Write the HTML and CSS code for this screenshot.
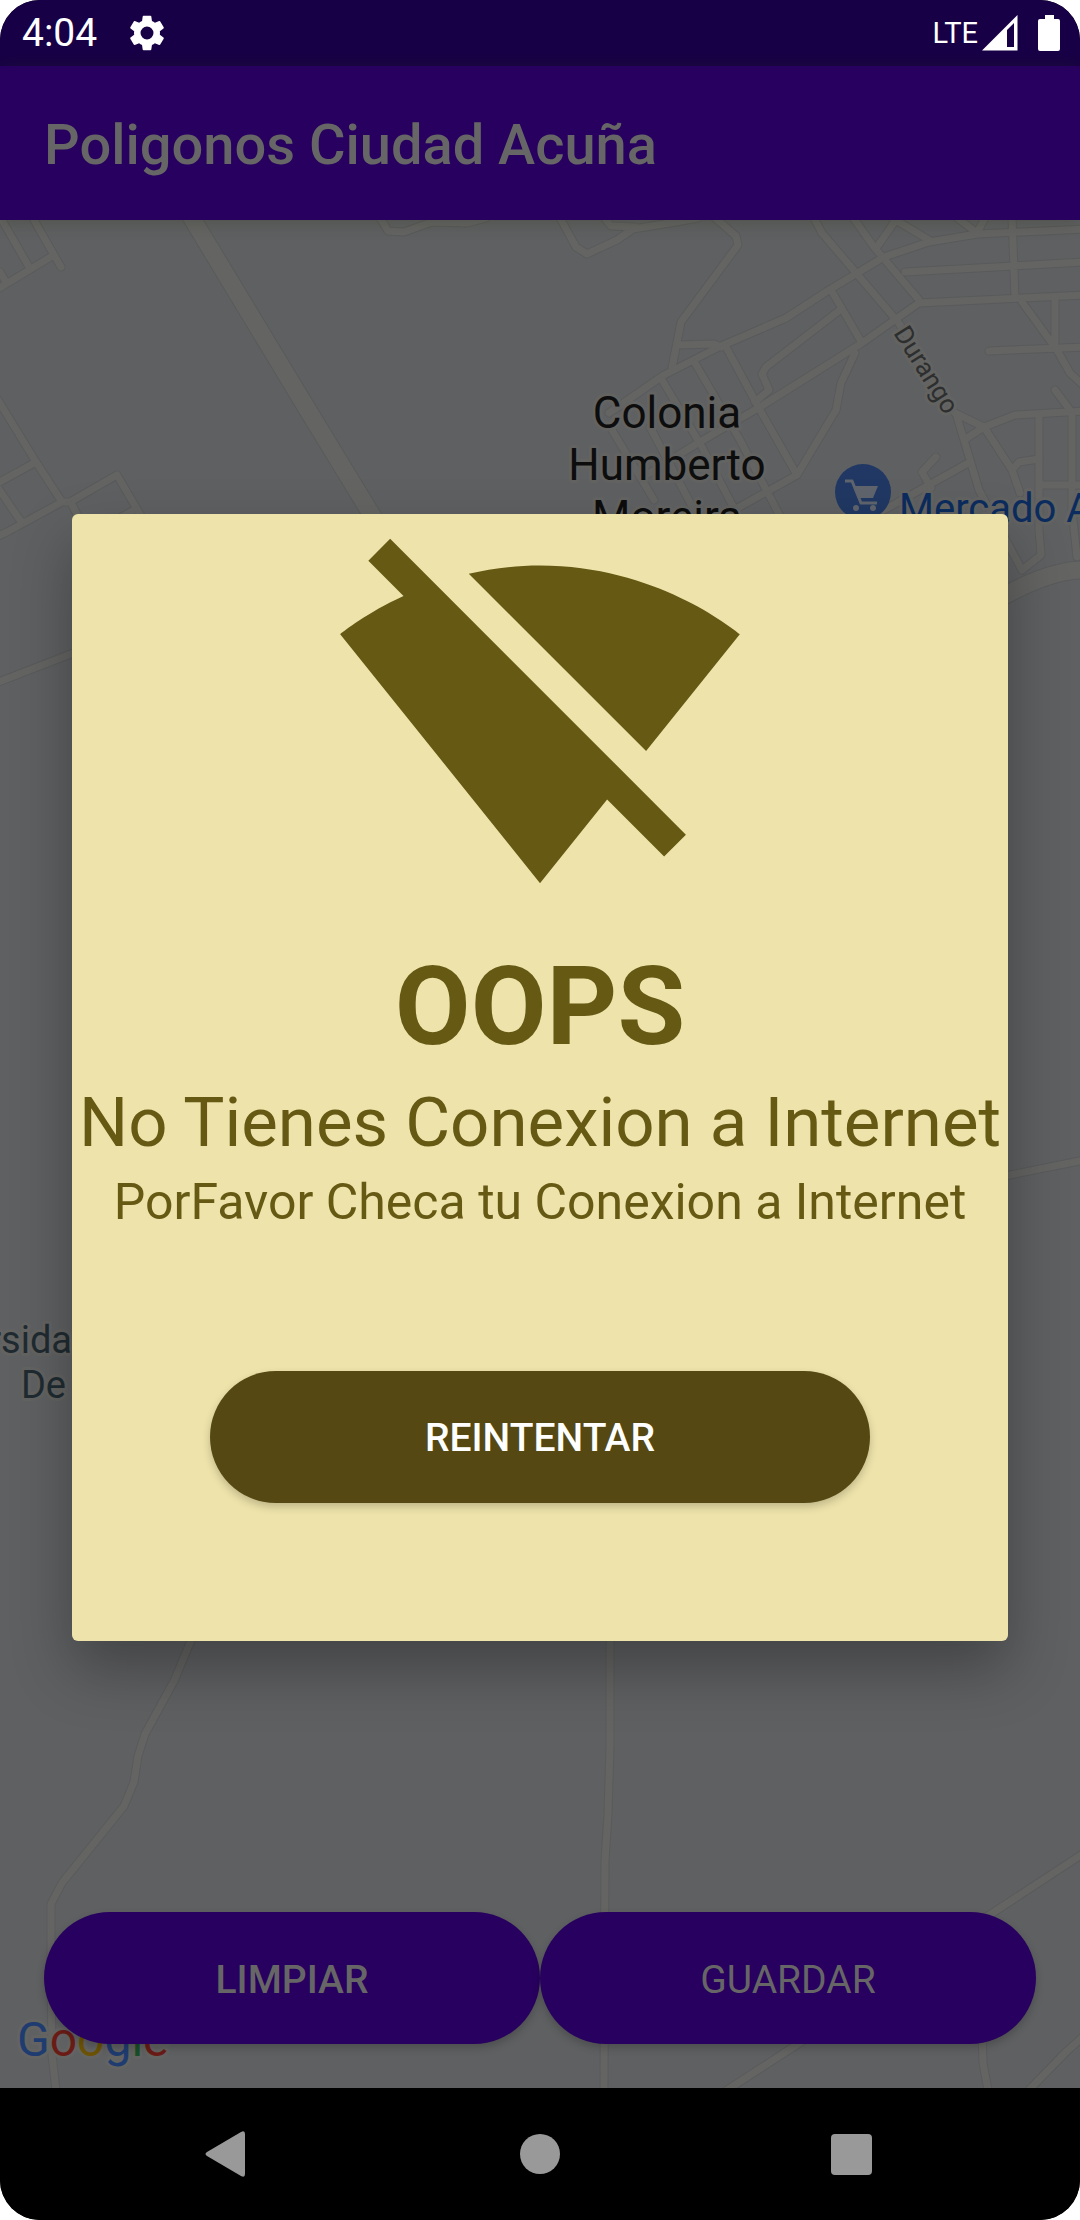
FILE: index.html
```html
<!DOCTYPE html>
<html lang="es">
<head>
<meta charset="utf-8">
<meta name="viewport" content="width=device-width, initial-scale=1">
<title>Poligonos Ciudad Acuña</title>
<link rel="stylesheet" href="styles.css">
</head>
<body>
<div class="device">
  <header class="status-bar">
    <span class="clock">4:04</span>
    <svg class="gear" viewBox="2 2 20 20" aria-hidden="true"><path fill="currentColor" d="M19.14 12.94c.04-.3.06-.61.06-.94 0-.32-.02-.64-.07-.94l2.03-1.58a.49.49 0 0 0 .12-.61l-1.92-3.32a.49.49 0 0 0-.59-.22l-2.39.96a7 7 0 0 0-1.62-.94l-.36-2.54a.48.48 0 0 0-.48-.41h-3.84a.47.47 0 0 0-.47.41l-.36 2.54c-.59.24-1.13.57-1.62.94l-2.39-.96a.48.48 0 0 0-.59.22L2.74 8.87a.47.47 0 0 0 .12.61l2.03 1.58c-.05.3-.09.63-.09.94s.02.64.07.94l-2.03 1.58a.49.49 0 0 0-.12.61l1.92 3.32c.12.22.37.29.59.22l2.39-.96c.5.38 1.03.7 1.62.94l.36 2.54c.05.24.24.41.48.41h3.84c.24 0 .44-.17.47-.41l.36-2.54c.59-.24 1.13-.56 1.62-.94l2.39.96c.22.08.47 0 .59-.22l1.92-3.32a.47.47 0 0 0-.12-.61l-2.01-1.58zM12 15.6a3.6 3.6 0 1 1 0-7.2 3.6 3.6 0 0 1 0 7.2z"/></svg>
    <span class="network">LTE</span>
    <svg class="signal" viewBox="0 0 36 36" aria-hidden="true"><path fill="currentColor" fill-rule="evenodd" d="M0 35.500L35.500 0V35.500zM25 15V32h7V8z"/></svg>
    <svg class="battery" viewBox="0 0 22 36" aria-hidden="true"><path fill="currentColor" d="M7 0h9v4h4q2 0 2 2v28q0 2-2 2H2q-2 0-2-2V6q0-2 2-2h5z"/></svg>
  </header>

  <div class="app-bar"><h1 class="app-title">Poligonos Ciudad Acuña</h1></div>

  <main class="map">
    <svg class="map-canvas" viewBox="0 220 1080 1868" preserveAspectRatio="xMidYMin slice" role="img" aria-label="Mapa">
      <defs>
        <g id="streets">
          <path d="M2 220L29 267M34 220L54 255L61 267M54 255L6 284L-4 290M0 272L6 282"/>
          <path d="M379 216L388 231L404 232L432 222L467 223L486 218"/>
          <path d="M-2 400L36 462L62 502M36 462L-4 484M-2 488L22 523M-4 537L7 532L62 502H70L117 475L141 516M71 503L78 516M134 510L120 518"/>
          <path d="M-4 683L76 652"/>
          <path d="M193 1636L174 1681L145 1734L138 1756L134 1782L124 1806L62 1883L51 1904V1956L52 2055L56 2090"/>
          <path d="M610 1630V1746L608 1814L605 1861L604 2090M1084 1853L991 1914L798 2044L727 2090M982 2030L983 2063L988 2090M1084 2036L1067 2051L1029 2090M1000 1177L1084 1160"/>
          <path d="M559 216L576 247L587 254L617 240L633 229L676 222L698 218M603 216L611 226L635 227"/>
          <path d="M713 216L736 236L738 245L681 322L672 368"/>
          <path d="M813 216L822 233L898 322L930 370M852 216L874 247L919 300M898 217L877 247M892 218L929 240"/>
          <path d="M609 413L664 375L719 347L786 318L829 290L884 257L929 242L977 234L1084 229"/>
          <path d="M955 216L977 233L986 216M1012 216L1015 298M905 272L1084 262"/>
          <path d="M643 477L698 443L760 407L862 343L896 319L919 303L1022 298L1084 295M831 290L862 343"/>
          <path d="M840 310L766 367L762 374L769 390L755 402M678 345L714 344L721 347"/>
          <path d="M726 347L760 410L797 475L836 410L841 383L855 353M797 475L734 510"/>
          <path d="M695 363L740 440L780 516M662 380L702 447L738 516M612 430L654 500M650 427L694 510"/>
          <path d="M1022 302L1057 350L1070 373L1084 386M1055 298V347M989 351L1084 347"/>
          <path d="M955 413L984 427L1015 415L1084 411M957 417L964 440L979 490L1022 570M964 440L984 427L1012 470L1020 493M1012 470L1019 462L1039 459"/>
          <path d="M1039 415V530L1041 555L1022 570M1072 412V510L1077 557M1043 485H1084M1055 390L1070 410M936 457L922 472L931 488M970 462L884 510"/>
        </g>
        <g id="avenues">
          <path d="M190 215L306 407L373 517M1084 570Q1050 570 1000 598"/>
        </g>
      </defs>
      <use href="#streets" class="street-edge"/>
      <use href="#avenues" class="avenue-edge"/>
      <use href="#streets" class="street"/>
      <use href="#avenues" class="avenue"/>

      <g class="label label-area">
        <text x="667" y="428">Colonia</text>
        <text x="667" y="480">Humberto</text>
        <text x="667" y="532">Moreira</text>
      </g>
      <text class="label label-street" transform="translate(893 333) rotate(58)">Durango</text>
      <g>
        <circle cx="863" cy="492" r="28" fill="#203863"/>
        <path fill="none" stroke="#5f646d" stroke-width="3" d="M845 481h7l9 22h16"/>
        <path fill="#5f646d" d="M853 486h25l-5 12h-15z"/>
        <circle cx="856" cy="508" r="3" fill="#5f646d"/><circle cx="873" cy="508" r="3" fill="#5f646d"/>
      </g>
      <text class="label label-place" x="899" y="522">Mercado A</text>
      <g class="label label-school">
        <text x="72" y="1353">rsida</text>
        <text x="66" y="1398">De</text>
      </g>
      <text class="label label-brand" x="17" y="2056"><tspan fill="#1f3c70">G</tspan><tspan fill="#6a1b16">o</tspan><tspan fill="#6b5204">o</tspan><tspan fill="#1f3c70">g</tspan><tspan fill="#184f27">l</tspan><tspan fill="#6a1b16">e</tspan></text>
    </svg>
    <div class="map-actions">
      <button class="pill strong" type="button">LIMPIAR</button>
      <button class="pill" type="button">GUARDAR</button>
    </div>
  </main>

  <nav class="nav-bar">
    <button class="nav-button" type="button" aria-label="Atrás"><svg class="nav-icon" viewBox="0 0 48 48"><path fill="currentColor" d="M3 22L37 2q4-2 4 2v40q0 4-4 2L3 26q-3-2 0-4z"/></svg></button>
    <button class="nav-button" type="button" aria-label="Inicio"><svg class="nav-icon" viewBox="0 0 48 48"><circle fill="currentColor" cx="24" cy="24" r="20"/></svg></button>
    <button class="nav-button" type="button" aria-label="Recientes"><svg class="nav-icon" viewBox="0 0 48 48"><rect fill="currentColor" x="3" y="4" width="41" height="41" rx="4"/></svg></button>
  </nav>

  <div class="overlay">
    <section class="dialog" role="dialog" aria-labelledby="dialog-title">
      <svg class="offline-icon" viewBox="0 0 24 24" aria-hidden="true"><path fill="currentColor" d="M23.640 7c-.450-.340-4.930-4-11.640-4-1.500 0-2.890.190-4.150.480L18.180 13.800 23.640 7zm-6.600 8.220L3.270 1.440 2 2.720l2.050 2.060C1.910 5.760.590 6.820.360 7l11.630 14.490.010.010.010-.010 3.900-4.860 3.320 3.320 1.270-1.270-3.460-3.460z"/></svg>
      <h2 class="dialog-title" id="dialog-title">OOPS</h2>
      <p class="dialog-lead">No Tienes Conexion a Internet</p>
      <p class="dialog-text">PorFavor Checa tu Conexion a Internet</p>
      <button class="pill retry strong" type="button">REINTENTAR</button>
    </section>
  </div>
</div>
</body>
</html>
```

FILE: styles.css
```css
* { box-sizing: border-box; }

body {
  margin: 0;
  background: #fff;
  font-family: Roboto, "Liberation Sans", sans-serif;
}

h1, h2, p { margin: 0; }

button {
  border: 0;
  padding: 0;
  font-family: inherit;
}

.device {
  position: relative;
  display: flex;
  flex-direction: column;
  min-height: 100vh;
  border-radius: 40px;
  overflow: hidden;
  background: #000;
}

/* Status bar */
.status-bar {
  display: flex;
  align-items: center;
  height: 66px;
  padding: 0 20px 0 22px;
  background: #180046;
  color: #fff;
}
.clock { font-size: 39px; line-height: 68px; }
.gear { width: 36px; height: 36px; margin-left: 32px; }
.network { margin-left: auto; font-size: 29px; }
.signal { width: 36px; height: 36px; margin-left: 4px; }
.battery { width: 22px; height: 36px; margin-left: 20px; }

/* App bar */
.app-bar {
  position: relative;
  display: flex;
  align-items: center;
  height: 154px;
  padding: 4px 44px 0;
  background: #28005f;
  box-shadow: 0 2px 16px rgba(40, 50, 20, .3);
  z-index: 1;
}
.app-title {
  color: #666;
  font-size: 56px;
  font-weight: 500;
  line-height: 66px;
}

/* Map */
.map {
  position: relative;
  display: flex;
  flex: 1;
  align-items: flex-end;
  background: #5f6062;
}
.map-canvas {
  position: absolute;
  inset: 0;
  width: 100%;
  height: 100%;
}
.street, .street-edge, .avenue, .avenue-edge {
  fill: none;
  stroke-linecap: round;
  stroke-linejoin: round;
}
.street-edge { stroke: #595a5b; stroke-width: 9px; }
.street { stroke: #646463; stroke-width: 7px; }
.avenue-edge { stroke: #595a5b; stroke-width: 19px; }
.avenue { stroke: #646463; stroke-width: 17px; }

.label {
  stroke: #636362;
  stroke-width: 6px;
  stroke-linejoin: round;
  paint-order: stroke;
}
.label-area { font-size: 44px; fill: #0d0d0d; text-anchor: middle; }
.label-street { font-size: 26px; fill: #2d2e2e; }
.label-place { font-size: 40px; fill: #0b2c5e; }
.label-school { font-size: 38px; fill: #1f2b31; text-anchor: end; }
.label-brand { font-size: 48px; }

.map-actions {
  position: relative;
  display: flex;
  flex: 1;
  padding: 44px;
}
.map-actions .pill { flex: 1; }

.pill {
  height: 132px;
  padding-top: 3px;
  border-radius: 66px;
  background: #28005f;
  color: #666;
  font-size: 39px;
  font-weight: 400;
  box-shadow: 0 4px 8px rgba(0, 0, 0, .2);
}
.strong { font-weight: 500; }

/* System navigation */
.nav-bar {
  display: flex;
  justify-content: center;
  height: 132px;
  background: #000;
}
.nav-button {
  display: flex;
  flex: 0 1 312px;
  align-items: center;
  justify-content: center;
  background: none;
  color: #999;
}
.nav-icon { width: 48px; height: 48px; }

/* Dialog */
.overlay {
  position: absolute;
  inset: 66px 0 132px;
  z-index: 2;
  display: flex;
  align-items: center;
  padding: 0 72px;
}
.dialog {
  display: flex;
  flex: 1;
  flex-direction: column;
  align-items: center;
  padding-bottom: 138px;
  border-radius: 6px;
  background: #eee3aa;
  color: #655914;
  text-align: center;
  box-shadow: 0 28px 60px rgba(0, 0, 0, .3);
}
.offline-icon { width: 412px; height: 412px; }
.dialog-title {
  margin-top: 11px;
  font-size: 110px;
  font-weight: 700;
  line-height: 140px;
}
.dialog-lead { font-size: 69px; line-height: 92px; }
.dialog-text { font-size: 50px; line-height: 66px; }
.retry {
  width: 660px;
  max-width: 100%;
  margin-top: 136px;
  background: #554812;
  color: #fff;
}
```
